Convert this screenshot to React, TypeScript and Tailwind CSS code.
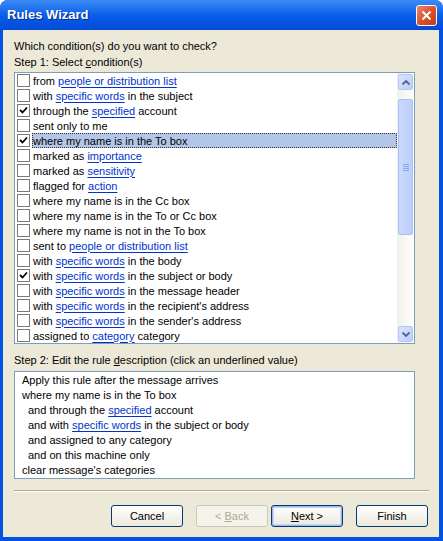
import React from 'react';

type Part = string | { link: string };

const conditions: { parts: Part[]; checked?: boolean; selected?: boolean }[] = [
    { parts: ['from ', { link: 'people or distribution list' }] },
    { parts: ['with ', { link: 'specific words' }, ' in the subject'] },
    { parts: ['through the ', { link: 'specified' }, ' account'], checked: true },
    { parts: ['sent only to me'] },
    { parts: ['where my name is in the To box'], checked: true, selected: true },
    { parts: ['marked as ', { link: 'importance' }] },
    { parts: ['marked as ', { link: 'sensitivity' }] },
    { parts: ['flagged for ', { link: 'action' }] },
    { parts: ['where my name is in the Cc box'] },
    { parts: ['where my name is in the To or Cc box'] },
    { parts: ['where my name is not in the To box'] },
    { parts: ['sent to ', { link: 'people or distribution list' }] },
    { parts: ['with ', { link: 'specific words' }, ' in the body'] },
    { parts: ['with ', { link: 'specific words' }, ' in the subject or body'], checked: true },
    { parts: ['with ', { link: 'specific words' }, ' in the message header'] },
    { parts: ['with ', { link: 'specific words' }, " in the recipient's address"] },
    { parts: ['with ', { link: 'specific words' }, " in the sender's address"] },
    { parts: ['assigned to ', { link: 'category' }, ' category'] },
];

const description: { parts: Part[]; indent?: boolean }[] = [
    { parts: ['Apply this rule after the message arrives'] },
    { parts: ['where my name is in the To box'] },
    { parts: ['and through the ', { link: 'specified' }, ' account'], indent: true },
    { parts: ['and with ', { link: 'specific words' }, ' in the subject or body'], indent: true },
    { parts: ['and assigned to any category'], indent: true },
    { parts: ['and on this machine only'], indent: true },
    { parts: ["clear message's categories"] },
];

const Text = ({ parts }: { parts: Part[] }) => (
    <>
        {parts.map((p, i) =>
            typeof p === 'string' ? (
                <span key={i} className="whitespace-pre">{p}</span>
            ) : (
                <span key={i} className="whitespace-pre text-[#0033cc] underline underline-offset-[2px]">{p.link}</span>
            )
        )}
    </>
);

const CheckBox = ({ checked }: { checked?: boolean }) => (
    <div className="w-[13px] h-[13px] border border-[#7a7a7a] bg-white flex items-center justify-center shrink-0">
        {checked && (
            <svg width="9" height="9" viewBox="0 0 9 9">
                <path d="M1 4 L3.5 6.5 L8 1.5" stroke="#000" strokeWidth="1.8" fill="none" />
            </svg>
        )}
    </div>
);

const XpButton = ({ label, disabled, isDefault }: { label: React.ReactNode; disabled?: boolean; isDefault?: boolean }) => (
    <div
        className={`w-[72px] h-[22px] rounded-[3px] border flex items-center justify-center text-[11px] whitespace-pre ${
            disabled
                ? 'border-[#c9c7ba] bg-[#f5f4ea] text-[#aca899]'
                : 'border-[#003c74] bg-gradient-to-b from-white to-[#ece9dc] text-black'
        } ${isDefault ? 'shadow-[inset_0_0_0_1px_#9cb8ef,inset_0_0_0_2px_#c5d6f7]' : ''}`}
    >
        {label}
    </div>
);

export default function App() {
    return (
        <div className="w-[443px] h-[541px] bg-white" style={{ fontFamily: '"Liberation Sans", Arial, sans-serif' }}>
            <div className="w-full h-full flex flex-col bg-[#0452e2] rounded-t-[8px] overflow-hidden">
                {/* title bar */}
                <div className="h-[30px] shrink-0 flex items-center justify-between pl-[7px] pr-[6px] bg-gradient-to-b from-[#3c8cf7] via-[#0a5ee8] to-[#0249d6]">
                    <span className="text-white font-bold text-[13px] [text-shadow:1px_1px_0_#0a2a8a]">Rules Wizard</span>
                    <div className="w-[21px] h-[21px] rounded-[3px] border border-white bg-gradient-to-br from-[#e8866a] via-[#d9532f] to-[#c23a16] flex items-center justify-center">
                        <svg width="11" height="11" viewBox="0 0 11 11">
                            <path d="M1.5 1.5 L9.5 9.5 M9.5 1.5 L1.5 9.5" stroke="#fff" strokeWidth="2" />
                        </svg>
                    </div>
                </div>

                {/* body */}
                <div className="flex-1 ml-[3px] mr-[4px] mb-[4px] bg-[#ece9d8] flex flex-col pl-[11px] pr-[11px] pt-[9px] text-[11px] text-black">
                    <div className="h-[15px] leading-[15px]">Which condition(s) do you want to check?</div>
                    <div className="h-[15px] leading-[15px] mt-[1px]">Step 1: Select <span className="underline">c</span>ondition(s)</div>

                    {/* conditions list */}
                    <div className="mt-[2px] w-[401px] h-[272px] border border-[#7f9db9] bg-white flex">
                        <div className="flex-1 flex flex-col">
                            {conditions.map((c, i) => (
                                <div key={i} className="h-[15px] flex items-center pl-[2px]">
                                    <CheckBox checked={c.checked} />
                                    <div
                                        className={`ml-[2px] h-[15px] flex-1 flex items-center pl-[1px] pt-[1px] ${
                                            c.selected ? 'bg-[#b3c6e7] outline-1 outline-dotted outline-[#333] -outline-offset-1' : ''
                                        }`}
                                    >
                                        <Text parts={c.parts} />
                                    </div>
                                </div>
                            ))}
                        </div>
                        {/* scrollbar */}
                        <div className="w-[17px] flex flex-col bg-gradient-to-r from-[#f3f1ec] to-[#fefefb] pt-[1px] pb-[1px]">
                            <div className="mx-[1px] h-[16px] rounded-[2px] border border-[#b4c8f6] bg-gradient-to-br from-[#dbe6fd] to-[#b9cdfa] flex items-center justify-center">
                                <svg width="8" height="5" viewBox="0 0 8 5">
                                    <path d="M0.5 4.5 L4 1 L7.5 4.5" stroke="#4d6185" strokeWidth="1.8" fill="none" />
                                </svg>
                            </div>
                            <div className="mt-[9px] mx-[1px] h-[136px] rounded-[2px] border border-[#a9bff5] bg-gradient-to-r from-[#cad9fd] to-[#bccffb] flex items-center justify-center">
                                <div className="flex flex-col gap-[1px]">
                                    <div className="w-[6px] h-[1px] bg-[#8ba6ee]" />
                                    <div className="w-[6px] h-[1px] bg-[#8ba6ee]" />
                                    <div className="w-[6px] h-[1px] bg-[#8ba6ee]" />
                                    <div className="w-[6px] h-[1px] bg-[#8ba6ee]" />
                                </div>
                            </div>
                            <div className="flex-1" />
                            <div className="mx-[1px] h-[16px] rounded-[2px] border border-[#b4c8f6] bg-gradient-to-br from-[#dbe6fd] to-[#b9cdfa] flex items-center justify-center">
                                <svg width="8" height="5" viewBox="0 0 8 5">
                                    <path d="M0.5 0.5 L4 4 L7.5 0.5" stroke="#4d6185" strokeWidth="1.8" fill="none" />
                                </svg>
                            </div>
                        </div>
                    </div>

                    <div className="h-[15px] leading-[15px] mt-[9px]">
                        Step 2: Edit the rule <span className="underline">d</span>escription (click an underlined value)
                    </div>

                    {/* description */}
                    <div className="mt-[3px] w-[401px] h-[108px] border border-[#7f9db9] bg-white pt-[1px] pl-[7px]">
                        {description.map((d, i) => (
                            <div key={i} className={`h-[15px] leading-[15px] ${d.indent ? 'pl-[6px]' : ''}`}>
                                <Text parts={d.parts} />
                            </div>
                        ))}
                    </div>

                    {/* separator */}
                    <div className="mt-[11px] w-[415px] border-t border-[#aca899] border-b border-b-white" />

                    {/* buttons */}
                    <div className="mt-[13px] flex justify-end">
                        <XpButton label="Cancel" />
                        <div className="w-[13px]" />
                        <XpButton label={<>{'< '}<span className="underline">B</span>{'ack'}</>} disabled />
                        <div className="w-[3px]" />
                        <XpButton label={<><span className="underline">N</span>{'ext >'}</>} isDefault />
                        <div className="w-[13px]" />
                        <XpButton label="Finish" />
                    </div>
                </div>
            </div>
        </div>
    );
}
